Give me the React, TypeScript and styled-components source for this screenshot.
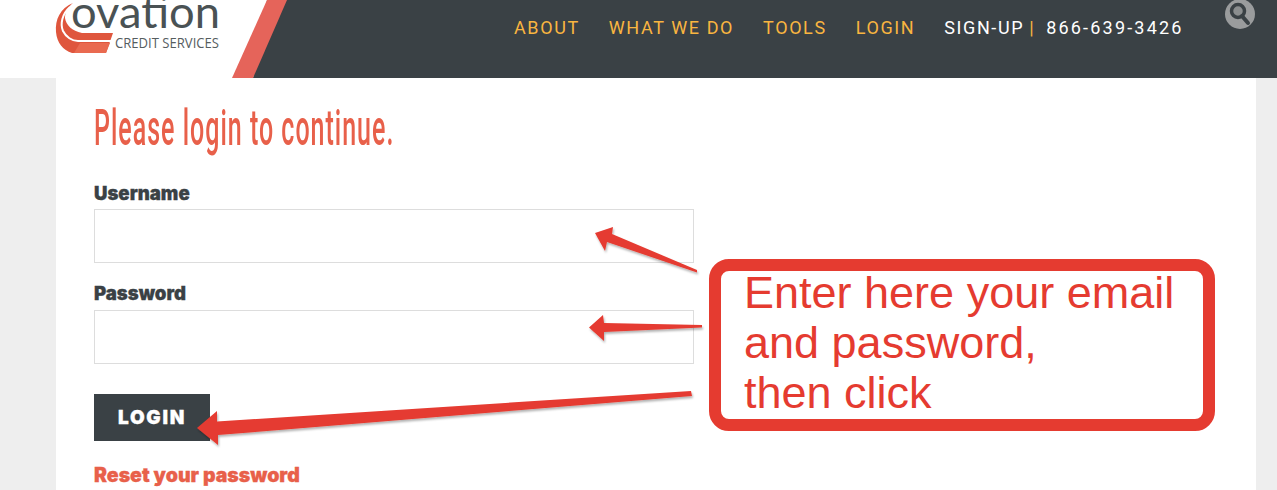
import React from "react";
import styled, { createGlobalStyle } from "styled-components";

const GlobalStyle = createGlobalStyle`
  html, body {
    margin: 0;
    padding: 0;
    height: 490px;
    overflow: hidden;
    background: #eeeeee;
    font-family: "Liberation Sans", Arial, sans-serif;
  }
`;

const NAV_ITEMS = ["ABOUT", "WHAT WE DO", "TOOLS", "LOGIN"];

const Logo = () => (
  <svg width="232" height="78" viewBox="0 0 232 78">
    <path
      d="M73 3C60 8 55 20 56 32C57 43 63 50 72 53H106L113 33H82C72 31 66 25 65 18C65 12 68 7 73 3Z"
      fill="#df563d"
    />
    <path d="M80 43H110L106 53H74Z" fill="#e96a50" />
    <path d="M70 7C62 14 60 24 63 31C66 37 72 41 78 41H112" fill="none" stroke="#fff" strokeWidth="2" />
    <text
      x="71"
      y="28"
      fontFamily="Lato, sans-serif"
      fontWeight="400"
      fontSize="45"
      fill="#4a5254"
      textLength="149"
      lengthAdjust="spacingAndGlyphs"
    >
      ovation
    </text>
    <text
      x="115"
      y="48"
      fontFamily="'Open Sans', sans-serif"
      fontSize="14"
      fill="#555d60"
      textLength="104"
      lengthAdjust="spacingAndGlyphs"
    >
      CREDIT SERVICES
    </text>
  </svg>
);

const Arrows = () => (
  <ArrowLayer width="1277" height="490" viewBox="0 0 1277 490">
    <defs>
      <filter id="arrowShadow" x="-5%" y="-20%" width="110%" height="150%">
        <feDropShadow dx="1" dy="2" stdDeviation="1" floodColor="#000" floodOpacity="0.3" />
      </filter>
    </defs>
    <g fill="#e53b30" filter="url(#arrowShadow)">
      <path d="M697 270L612 234L613 227L595 233L605 251L607 242L697 272.5Z" />
      <path d="M702 325L604 323L603 315L589 327.5L604 341L604 332L702 327.5Z" />
      <path d="M691 391L217 421.5L217 411L197 428L218 445L218 435L692 396Z" />
    </g>
  </ArrowLayer>
);

export default function App() {
  return (
    <Page>
      <GlobalStyle />
      <Header>
        <Logo />
        <Slant width="55" height="78" viewBox="0 0 55 78">
          <rect width="55" height="78" fill="#3a4145" />
          <path d="M0 0H35L21 78H0Z" fill="#fff" />
          <path d="M35 0H55L21 78H0Z" fill="#e5645a" />
        </Slant>
        <Nav>
          <NavLinks>
            {NAV_ITEMS.map((item) => (
              <NavLink key={item}>{item}</NavLink>
            ))}
            <SignUp>
              SIGN-UP
              <Pipe>|</Pipe>
              <Phone>866-639-3426</Phone>
            </SignUp>
          </NavLinks>
          <SearchBadge>
            <svg width="30" height="30" viewBox="0 0 30 30">
              <circle cx="15" cy="14" r="15" fill="#9a9c9d" />
              <circle cx="13" cy="11" r="6.5" fill="#8b8e8f" stroke="#3a4145" strokeWidth="3.5" />
              <path d="M17 16L23 23" stroke="#3a4145" strokeWidth="4" strokeLinecap="round" />
            </svg>
          </SearchBadge>
        </Nav>
      </Header>
      <Card>
        <Title>
          <TitleText>Please login to continue.</TitleText>
        </Title>
        <Label>Username</Label>
        <Input type="text" />
        <Label $second>Password</Label>
        <Input type="password" />
        <LoginButton>LOGIN</LoginButton>
        <ResetLink>Reset your password</ResetLink>
      </Card>
      <Arrows />
      <Callout>
        <CalloutText>
          Enter here your email
          <br />
          and password,
          <br />
          then click
        </CalloutText>
      </Callout>
    </Page>
  );
}

const Page = styled.div`
  position: relative;
  width: 1277px;
  height: 490px;
  overflow: hidden;
`;

const Header = styled.header`
  display: flex;
  height: 78px;
  background: #fff;
`;

const Slant = styled.svg`
  flex: none;
`;

const Nav = styled.nav`
  flex: 1;
  display: flex;
  justify-content: space-between;
  align-items: flex-start;
  background: #3a4145;
  padding: 0 22px 0 227px;
`;

const NavLinks = styled.div`
  display: flex;
  gap: 29px;
  padding-top: 18px;
  font-family: Roboto, sans-serif;
  font-size: 18px;
  line-height: 20px;
  letter-spacing: 1.6px;
  white-space: nowrap;
`;

const NavLink = styled.a`
  color: #f9b540;
`;

const SignUp = styled.span`
  color: #fff;
`;

const Pipe = styled.span`
  color: #f9b540;
  margin: 0 11px 0 5px;
`;

const Phone = styled.span`
  letter-spacing: 2.2px;
`;

const SearchBadge = styled.div`
  line-height: 0;
`;

const Card = styled.main`
  display: flex;
  flex-direction: column;
  align-items: flex-start;
  width: 1200px;
  height: 412px;
  margin-left: 56px;
  padding: 0 38px;
  box-sizing: border-box;
  background: #fff;
`;

const Title = styled.h1`
  margin: 24px 0 0;
  height: 52px;
  font-weight: 500;
  font-size: 50px;
  line-height: 52px;
  letter-spacing: 2px;
  color: #e8604a;
  font-family: Roboto, sans-serif;
  white-space: nowrap;
`;

const TitleText = styled.span`
  display: inline-block;
  transform: scaleX(0.5);
  transform-origin: left center;
`;

const Label = styled.label<{ $second?: boolean }>`
  margin-top: ${(p) => (p.$second ? "20px" : "29px")};
  margin-bottom: ${(p) => (p.$second ? "7px" : "6px")};
  font-family: Inter, sans-serif;
  font-weight: 900;
  font-size: 18.6px;
  line-height: 20px;
  color: #3a4145;
  -webkit-text-stroke: 0.3px #3a4145;
`;

const Input = styled.input`
  width: 600px;
  height: 54px;
  box-sizing: border-box;
  border: 1px solid #dddddd;
  background: #fff;
  outline: none;
`;

const LoginButton = styled.button`
  width: 116px;
  height: 47px;
  margin-top: 30px;
  border: 0;
  background: #3a4145;
  color: #fff;
  font-family: Inter, sans-serif;
  font-weight: 900;
  font-size: 19px;
  letter-spacing: 1.7px;
  -webkit-text-stroke: 0.3px #fff;
`;

const ResetLink = styled.a`
  margin-top: 23px;
  font-family: Inter, sans-serif;
  font-weight: 900;
  font-size: 19.5px;
  line-height: 22px;
  color: #e8604a;
  -webkit-text-stroke: 0.3px #e8604a;
`;

const ArrowLayer = styled.svg`
  position: absolute;
  inset: 0;
  pointer-events: none;
`;

const Callout = styled.div`
  position: absolute;
  left: 709px;
  top: 259px;
  width: 506px;
  height: 172px;
  box-sizing: border-box;
  padding-left: 23px;
  border: 12px solid #e53b30;
  border-radius: 20px;
  background: #fff;
  color: #e53b30;
  font-size: 45px;
  line-height: 50px;
  white-space: nowrap;
`;

const CalloutText = styled.div`
  margin-top: -3px;
`;
